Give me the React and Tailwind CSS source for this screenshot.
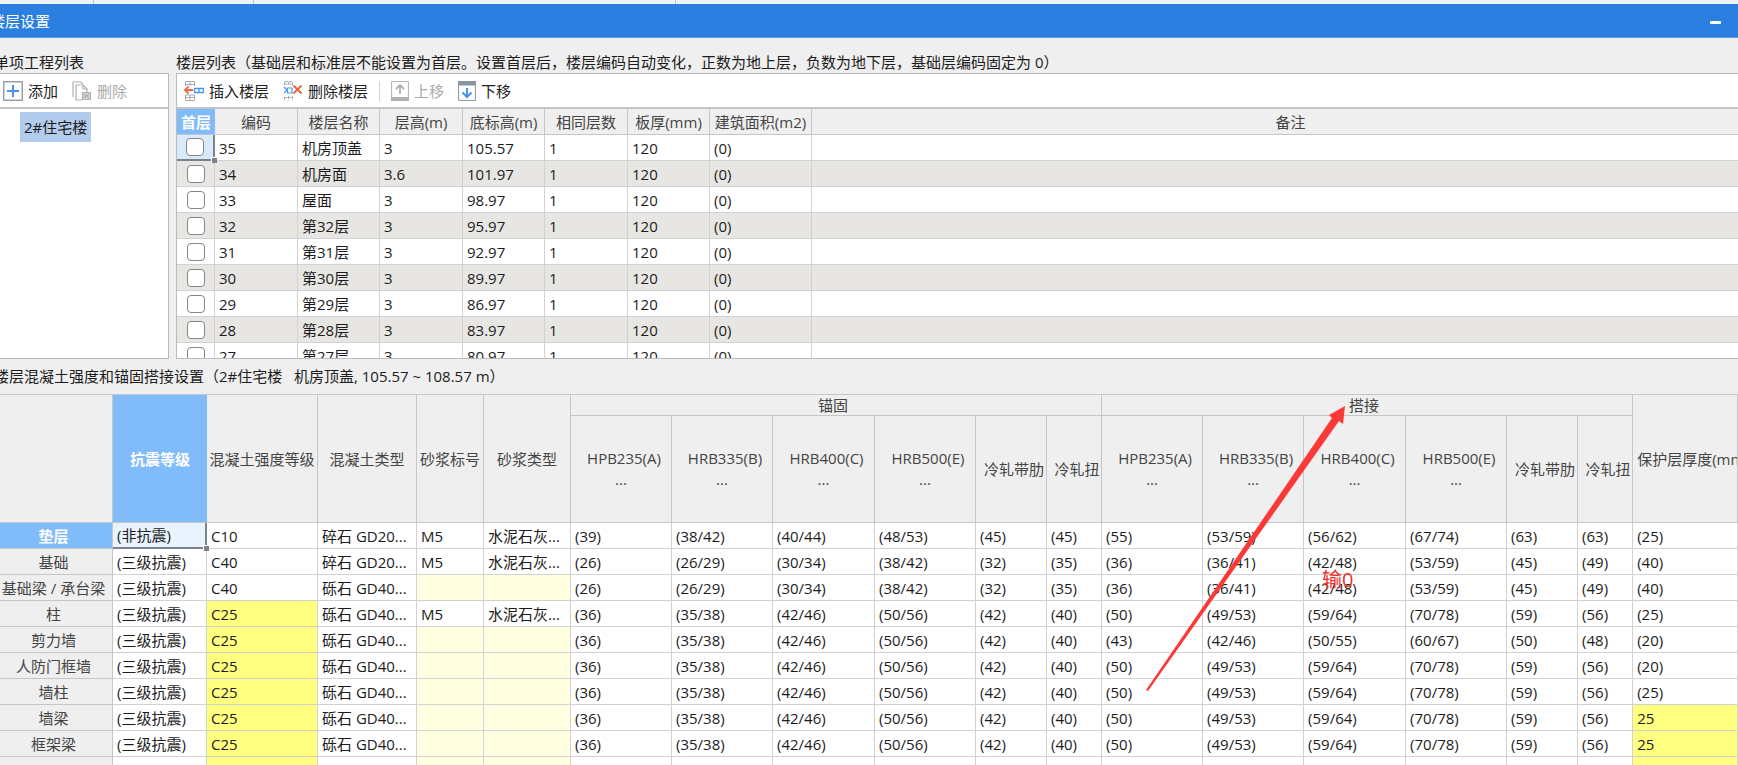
import React from "react";

const floors = [
  ["35", "机房顶盖", "3", "105.57"],
  ["34", "机房面", "3.6", "101.97"],
  ["33", "屋面", "3", "98.97"],
  ["32", "第32层", "3", "95.97"],
  ["31", "第31层", "3", "92.97"],
  ["30", "第30层", "3", "89.97"],
  ["29", "第29层", "3", "86.97"],
  ["28", "第28层", "3", "83.97"],
  ["27", "第27层", "3", "80.97"],
];

const floorHeads = ["编码", "楼层名称", "层高(m)", "底标高(m)", "相同层数", "板厚(mm)", "建筑面积(m2)", "备注"];

const common = ["(36)", "(35/38)", "(42/46)", "(50/56)", "(42)", "(40)"];
const lap = ["(50)", "(49/53)", "(59/64)", "(70/78)", "(59)", "(56)"];
const base = ["(26)", "(26/29)", "(30/34)", "(38/42)", "(32)", "(35)", "(36)", "(36/41)", "(42/48)", "(53/59)", "(45)", "(49)"];

const members = [
  { name: "垫层", quake: "(非抗震)", grade: "C10", type: "碎石 GD20...", mortar: true, values: ["(39)", "(38/42)", "(40/44)", "(48/53)", "(45)", "(45)", "(55)", "(53/59)", "(56/62)", "(67/74)", "(63)", "(63)"], cover: "(25)" },
  { name: "基础", quake: "(三级抗震)", grade: "C40", type: "碎石 GD20...", mortar: true, values: base, cover: "(40)" },
  { name: "基础梁 / 承台梁", quake: "(三级抗震)", grade: "C40", type: "砾石 GD40...", values: base, cover: "(40)" },
  { name: "柱", quake: "(三级抗震)", grade: "C25", type: "砾石 GD40...", mortar: true, values: [...common, ...lap], cover: "(25)" },
  { name: "剪力墙", quake: "(三级抗震)", grade: "C25", type: "砾石 GD40...", values: [...common, "(43)", "(42/46)", "(50/55)", "(60/67)", "(50)", "(48)"], cover: "(20)" },
  { name: "人防门框墙", quake: "(三级抗震)", grade: "C25", type: "砾石 GD40...", values: [...common, ...lap], cover: "(20)" },
  { name: "墙柱", quake: "(三级抗震)", grade: "C25", type: "砾石 GD40...", values: [...common, ...lap], cover: "(25)" },
  { name: "墙梁", quake: "(三级抗震)", grade: "C25", type: "砾石 GD40...", values: [...common, ...lap], cover: "25" },
  { name: "框架梁", quake: "(三级抗震)", grade: "C25", type: "砾石 GD40...", values: [...common, ...lap], cover: "25" },
  { name: "", quake: "", grade: "", type: "", values: Array(12).fill(""), cover: "", blank: true },
];

const bars = ["HPB235(A)", "HRB335(B)", "HRB400(C)", "HRB500(E)", "冷轧带肋", "冷轧扭"];

function AddIcon() {
  return (
    <svg width="20" height="20" viewBox="0 0 20 20" fill="none">
      <rect x=".75" y=".75" width="18.5" height="18.5" fill="#fff" stroke="#8795a1" strokeWidth="1.3" />
      <path d="M10 4v12M4 10h12" stroke="#4a94e6" strokeWidth="2" />
    </svg>
  );
}

function DeleteIcon() {
  return (
    <svg width="20" height="20" viewBox="0 0 20 20" fill="none" stroke="#b0b0b0" strokeWidth="1.2">
      <path d="M1 16V1h8l2 2" />
      <path d="M10 19H4V4h7l4 4v3M11 4v4h4" />
      <path d="M10.500 11.500h8v7h-8z" fill="#d6d6d6" />
      <path d="M12 13l5 4M17 13l-5 4" />
    </svg>
  );
}

function InsertFloorIcon() {
  return (
    <svg width="20" height="20" viewBox="0 0 20 20" fill="none">
      <path d="M1.500 5V.5h9V5M1.500 3.500h9M6 .5V5M1.500 14v5.500h9V14zM1.500 16.500h9M6 14v5" stroke="#a3abb2" />
      <path d="M1 9h8M4.500 5.500L1 9l3.500 3.500" stroke="#f2683f" strokeWidth="1.8" />
      <path d="M10.500 7.500h9v4h-9zM15 7.500v4" stroke="#4a94e6" strokeWidth="1.3" />
    </svg>
  );
}

function DeleteFloorIcon() {
  return (
    <svg width="20" height="20" viewBox="0 0 20 20" fill="none">
      <path d="M1.500 4V.5h8V4M1.500 3h8M5.500 .5V4M1.500 16v3.500M5.500 15v4.500M9.500 15v4.500M1.500 16.500h8" stroke="#a3abb2" strokeDasharray="3 1" />
      <path d="M1 6l3 3-3 3M4.500 7h4.500v5H4.500z" stroke="#4a94e6" strokeWidth="1.2" />
      <path d="M10.500 4.500l8 8M18.500 4.500l-8 8" stroke="#e9603d" strokeWidth="1.8" />
    </svg>
  );
}

function MoveIcon({ up }) {
  return up ? (
    <svg width="18" height="20" viewBox="0 0 18 20" fill="none" stroke="#b0b0b0">
      <path d="M.6.6h16.800v18.800H.6z" />
      <path d="M0 16h18v4H0z" fill="#b0b0b0" stroke="none" />
      <path d="M9 13V4M5 8l4-4 4 4" strokeWidth="1.800" />
    </svg>
  ) : (
    <svg width="18" height="20" viewBox="0 0 18 20" fill="none" stroke="#8795a1">
      <path d="M.6.6h16.800v18.800H.6z" />
      <path d="M0 0h18v4.500H0z" fill="#8795a1" stroke="none" />
      <path d="M9 7v9M4.500 11.500L9 16l4.500-4.500" stroke="#4a94e6" strokeWidth="2" />
    </svg>
  );
}

function Tool({ icon, label, disabled }) {
  return (
    <button type="button" disabled={disabled} className="flex items-center gap-[5px] text-[#222] disabled:text-[#aaa]">
      {icon}
      <span>{label}</span>
    </button>
  );
}

function Handle() {
  return <span className="absolute -right-1 -bottom-1 z-10 size-[6px] border-t border-l border-white bg-[#7d8288]" />;
}

const headCell = "border-r border-b border-[#c4c6ca] bg-[#efefef] p-0 font-normal text-[#444]";
const cell = "border-r border-b border-[#d2d2d4] py-0 pr-0 pl-1";

function FloorTable() {
  return (
    <table className="w-[calc(100%+32px)] table-fixed border-separate border-spacing-0 text-left">
      <colgroup>
        <col className="w-[38px]" />
        <col className="w-[83px]" />
        <col className="w-[82px]" />
        <col className="w-[83px]" />
        <col className="w-[82px]" />
        <col className="w-[83px]" />
        <col className="w-[82px]" />
        <col className="w-[102px]" />
        <col />
      </colgroup>
      <thead>
        <tr className="h-[26px] text-center">
          <th className="border-b border-[#c4c6ca] bg-[#80bbfa] p-0 font-bold text-white">首层</th>
          {floorHeads.map((h) => (
            <th key={h} className={headCell}>{h}</th>
          ))}
        </tr>
      </thead>
      <tbody>
        {floors.map(([code, name, height, level], i) => (
          <tr key={code} className="h-[26px] even:bg-[#e8e6e3]">
            <td className={i === 0 ? "relative border-r-2 border-b-2 border-[#7d8288] bg-[#d9eafc] p-0" : "border-r border-b border-[#d2d2d4] p-0"}>
              <input type="checkbox" aria-label={`首层 ${name}`} className="mx-auto block size-[18px] appearance-none rounded-[4px] border border-[#858585] bg-white" />
              {i === 0 && <Handle />}
            </td>
            <td className={cell}>{code}</td>
            <td className={cell}>{name}</td>
            <td className={cell}>{height}</td>
            <td className={cell}>{level}</td>
            <td className={cell}>1</td>
            <td className={cell}>120</td>
            <td className={cell}>(0)</td>
            <td className={cell} />
          </tr>
        ))}
      </tbody>
    </table>
  );
}

function BarHead({ name }) {
  return (
    <th className={`${headCell} leading-[21px]`}>
      <span className="block pl-[6px]">{name}</span>
      {name.startsWith("H") && <span className="block">...</span>}
    </th>
  );
}

function StrengthTable() {
  return (
    <table className="w-full table-fixed border-separate border-spacing-0 border-t border-[#c4c6ca] text-left whitespace-nowrap">
      <colgroup>
        <col className="w-[113px]" />
        <col className="w-[94px]" />
        <col className="w-[111px]" />
        <col className="w-[99px]" />
        <col className="w-[67px]" />
        <col className="w-[87px]" />
        {[0, 1].map((g) => (
          <React.Fragment key={g}>
            <col className="w-[101px]" />
            <col className="w-[101px]" />
            <col className="w-[102px]" />
            <col className="w-[101px]" />
            <col className="w-[71px]" />
            <col className="w-[55px]" />
          </React.Fragment>
        ))}
        <col />
      </colgroup>
      <thead className="text-center">
        <tr className="h-[21px] leading-5">
          <td rowSpan={2} className={headCell} />
          <th rowSpan={2} className="border-b border-[#c4c6ca] bg-[#80bbfa] p-0 font-bold text-white">抗震等级</th>
          <th rowSpan={2} className={headCell}>混凝土强度等级</th>
          <th rowSpan={2} className={headCell}>混凝土类型</th>
          <th rowSpan={2} className={headCell}>砂浆标号</th>
          <th rowSpan={2} className={headCell}>砂浆类型</th>
          <th colSpan={6} className={headCell}><span className="pr-[6px]">锚固</span></th>
          <th colSpan={6} className={headCell}><span className="pr-[6px]">搭接</span></th>
          <th rowSpan={2} className={`${headCell} overflow-hidden text-left`}><span className="pl-1">保护层厚度(mm)</span></th>
        </tr>
        <tr className="h-[107px]">
          {bars.map((b) => <BarHead key={b} name={b} />)}
          {bars.map((b) => <BarHead key={b} name={b} />)}
        </tr>
      </thead>
      <tbody className="bg-white">
        {members.map((m, i) => {
          const yellow = m.grade === "C25" || m.blank;
          const mortarCell = m.mortar ? cell : `${cell} bg-[#ffffe1]`;
          return (
            <tr key={i} className="h-[26px]">
              <th className={i === 0 ? "border-r border-b border-[#c4c6ca] bg-[#80bbfa] py-0 pr-[5px] pl-0 text-center font-bold text-white" : "border-r border-b border-[#c4c6ca] bg-[#efefef] py-0 pr-[5px] pl-0 text-center font-normal text-[#444]"}>{m.name}</th>
              <td className={i === 0 ? "relative border-r-2 border-b-2 border-[#7d8288] bg-[#e8f3fe] py-0 pr-0 pl-1" : cell}>
                {m.quake}
                {i === 0 && <Handle />}
              </td>
              <td className={yellow ? `${cell} bg-[#ffff80]` : cell}>{m.grade}</td>
              <td className={cell}>{m.type}</td>
              <td className={mortarCell}>{m.mortar ? "M5" : ""}</td>
              <td className={mortarCell}>{m.mortar ? "水泥石灰..." : ""}</td>
              {m.values.map((v, k) => <td key={k} className={cell}>{v}</td>)}
              <td className={i > 6 ? `${cell} bg-[#ffff80]` : cell}>{m.cover}</td>
            </tr>
          );
        })}
      </tbody>
    </table>
  );
}

export default function App() {
  return (
    <div className="flex h-screen flex-col overflow-hidden bg-[#efefef] font-['Open_Sans','Noto_Sans_CJK_SC',sans-serif] text-[15px] leading-5 text-[#1c1c1c]">
      <div className="flex h-1 shrink-0 bg-[#eef3f5]">
        <span className="w-[94px] border-r border-[#c4c8cc]" />
        <span className="w-[160px] border-r border-[#c4c8cc]" />
        <span className="w-[422px] border-r border-[#c4c8cc]" />
      </div>
      <header className="flex h-[34px] shrink-0 items-center justify-between border-b border-[#5a9bea] bg-[#2b7fe1] pr-[17px] text-white">
        <h1 className="-ml-[10px]">楼层设置</h1>
        <button type="button" aria-label="最小化" className="flex h-5 items-center">
          <span className="mt-1 block h-[3px] w-[11px] rounded-[1px] bg-white" />
        </button>
      </header>

      <div className="flex shrink-0 gap-[7px] pt-[14px]">
        <section className="w-[169px] shrink-0">
          <h2 className="-ml-[6px] h-[21px]">单项工程列表</h2>
          <div className="border-y border-r border-[#b9bbbf] bg-white">
            <div className="flex h-[35px] items-center gap-[14px] border-b-2 border-[#c4c4c6] pl-[3px]">
              <Tool icon={<AddIcon />} label="添加" />
              <Tool icon={<DeleteIcon />} label="删除" disabled />
            </div>
            <ul className="h-[249px] pt-[3px] pl-5">
              <li className="inline-block bg-[#b3cbec] px-1 py-[5px]">2#住宅楼</li>
            </ul>
          </div>
        </section>
        <section className="min-w-0 flex-1">
          <h2 className="h-[21px]">楼层列表（基础层和标准层不能设置为首层。设置首层后，楼层编码自动变化，正数为地上层，负数为地下层，基础层编码固定为 0）</h2>
          <div className="border-y border-l border-[#b9bbbf] bg-white">
            <div className="flex h-[35px] items-center gap-[14px] border-b-2 border-[#c4c4c6] pl-[7px]">
              <Tool icon={<InsertFloorIcon />} label="插入楼层" />
              <Tool icon={<DeleteFloorIcon />} label="删除楼层" />
              <span className="-mx-[3px] h-5 border-l border-[#d4d4d4]" />
              <Tool icon={<MoveIcon up />} label="上移" disabled />
              <Tool icon={<MoveIcon />} label="下移" />
            </div>
            <div className="h-[249px] overflow-hidden">
              <FloorTable />
            </div>
          </div>
        </section>
      </div>

      <section className="relative">
        <h2 className="-ml-[6px] pt-[7px] pb-2">楼层混凝土强度和锚固搭接设置（2#住宅楼&nbsp;&nbsp; 机房顶盖, 105.57 ~ 108.57 m）</h2>
        <StrengthTable />
        <svg className="pointer-events-none absolute top-[47px] left-[1146px]" width="200" height="286" viewBox="0 0 200 286">
          <path d="M0 284L186 12l-3-3L199 0l-2 18-4-3L2 285z" fill="#fb3a37" />
        </svg>
        <span className="absolute top-[207px] left-[1322px] text-xl text-[#f0302c]">输0</span>
      </section>
    </div>
  );
}
